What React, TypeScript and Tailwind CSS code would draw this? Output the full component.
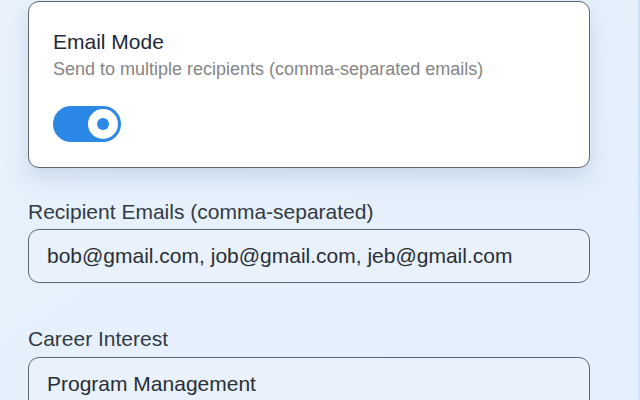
import React from "react";

export default function App() {
  return (
    <div
      className="w-[640px] h-[400px] overflow-hidden bg-gradient-to-br from-[#e9f2fc] to-[#e3effc] border-r-2 border-[#cfe2f8]"
      style={{ fontFamily: '"Liberation Sans", Arial, sans-serif' }}
    >
      <div className="pl-[28px] pr-[48px] pt-[1px]">
        <div className="rounded-[11px] border border-[#60666f] bg-white pl-[24px] pr-[24px] pt-[26px] pb-[25px] shadow-[0_10px_22px_rgba(120,150,190,0.28)]">
          <div className="text-[21px] leading-[28px] text-[#1f2937]">Email Mode</div>
          <div className="mt-[1px] text-[18px] leading-[24px] text-[#858585]">
            Send to multiple recipients (comma-separated emails)
          </div>
          <div className="mt-[25px] flex h-[36px] w-[68px] items-center justify-end rounded-full bg-[#2b88e6] pr-[3px]">
            <div className="flex h-[30px] w-[30px] items-center justify-center rounded-full bg-white">
              <div className="h-[12px] w-[12px] rounded-full bg-[#2b88e6]" />
            </div>
          </div>
        </div>

        <div className="mt-[32px] text-[21px] leading-[24px] text-[#333a44]">
          Recipient Emails (comma-separated)
        </div>
        <div className="mt-[5px] flex h-[54px] items-center rounded-[11px] border-[1.5px] border-[#60666f] bg-[#e8f1fc] pl-[18px] text-[21px] text-[#2a2f36]">
          bob@gmail.com, job@gmail.com, jeb@gmail.com
        </div>

        <div className="mt-[44px] text-[21px] leading-[24px] text-[#333a44]">Career Interest</div>
        <div className="mt-[6px] flex h-[54px] items-center rounded-[11px] border-[1.5px] border-[#60666f] bg-[#e8f1fc] pl-[18px] text-[21px] text-[#2a2f36]">
          Program Management
        </div>
      </div>
    </div>
  );
}
